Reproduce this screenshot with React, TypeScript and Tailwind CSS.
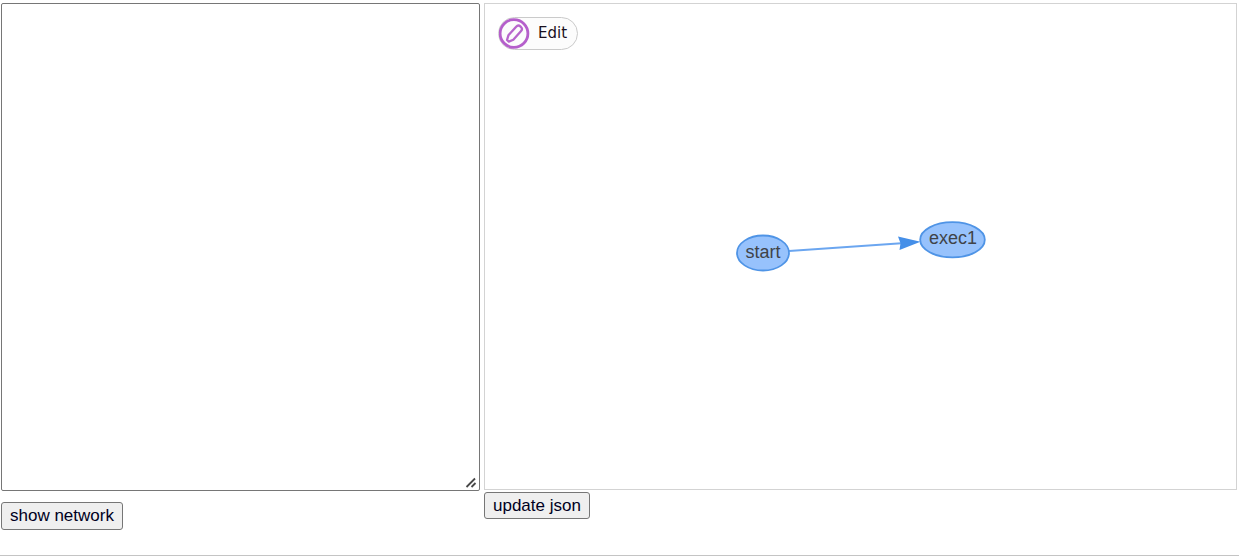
import { useState } from "react";

const BUTTON =
  "rounded-[3px] border border-[#767676] bg-[#efefef] px-2 text-[17px] text-[#000022] hover:bg-[#e5e5e5]";

function EditIcon() {
  return (
    <svg viewBox="0 0 31 31" className="size-[31px] shrink-0" fill="none" aria-hidden="true">
      <circle cx="15" cy="15.5" r="13.9" stroke="#b55fcb" strokeWidth="2.8" />
      <g transform="translate(15.2 15.8) rotate(42)" stroke="#b766cc" strokeWidth="2.3" strokeLinejoin="round">
        <path d="M-3.3 -6.6 Q-3.3 -9.6 0 -9.6 Q3.3 -9.6 3.3 -6.6 V5 L1.2 9.4 H-1.2 L-3.3 5 Z" />
      </g>
    </svg>
  );
}

function ResizeGrip() {
  return (
    <svg
      viewBox="0 0 14 14"
      className="pointer-events-none absolute right-[2px] bottom-[2px] size-[14px] bg-white"
      fill="none"
      stroke="#484848"
      strokeWidth="1.8"
      aria-hidden="true"
    >
      <path d="M2.5 12 L11 3.5 M7.5 12 L11.5 8" />
    </svg>
  );
}

function NetworkGraph() {
  return (
    <svg
      viewBox="0 0 751 485"
      className="absolute inset-0 size-full font-['Liberation_Sans',Arial,sans-serif]"
      role="img"
      aria-label="Network from start to exec1"
    >
      <path d="M304 247 L420 239" stroke="#6ba6f0" strokeWidth="2" />
      <path d="M435.5 237.8 L413 232.5 L415.5 239.3 L414.5 246 Z" fill="#458fe8" />
      <g fill="#97c2fc" stroke="#4f94e6" strokeWidth="1.8">
        <ellipse cx="278" cy="249" rx="26" ry="17.5" />
        <ellipse cx="467.5" cy="235.8" rx="32.3" ry="17.6" />
      </g>
      <g fill="#404348" fontSize="18" textAnchor="middle">
        <text x="278" y="254">start</text>
        <text x="468" y="240">exec1</text>
      </g>
    </svg>
  );
}

export default function App() {
  const [json, setJson] = useState("");

  return (
    <main className="border-b border-[#c4c4c4] bg-white pt-[3px] pr-[2px] pb-[25px] pl-px font-['Liberation_Sans',Arial,sans-serif]">
      <div className="grid grid-cols-[479fr_753fr] items-start gap-1">
        <section className="flex min-w-0 flex-col items-start gap-[11px]">
          <div className="relative w-full">
            <textarea
              aria-label="Network JSON"
              value={json}
              onChange={(event) => setJson(event.target.value)}
              className="block h-[488px] w-full resize-y rounded-[2px] border border-[#767676] bg-white p-0.5 font-mono text-sm"
            />
            <ResizeGrip />
          </div>
          <button type="button" className={`${BUTTON} h-7`}>
            show network
          </button>
        </section>
        <section className="flex min-w-0 flex-col items-start gap-[2px]">
          <div className="relative h-[487px] w-full border border-[#d3d3d3] px-[13px] py-[13px]">
            <NetworkGraph />
            <button
              type="button"
              className="relative flex h-[33px] items-center gap-2 rounded-full border border-[#cacaca] bg-[#fcfcfc] pr-[10px] font-['DejaVu_Sans',Verdana,sans-serif] text-[15px] text-[#1a1020]"
            >
              <EditIcon />
              Edit
            </button>
          </div>
          <button type="button" className={`${BUTTON} h-[27px]`}>
            update json
          </button>
        </section>
      </div>
    </main>
  );
}
